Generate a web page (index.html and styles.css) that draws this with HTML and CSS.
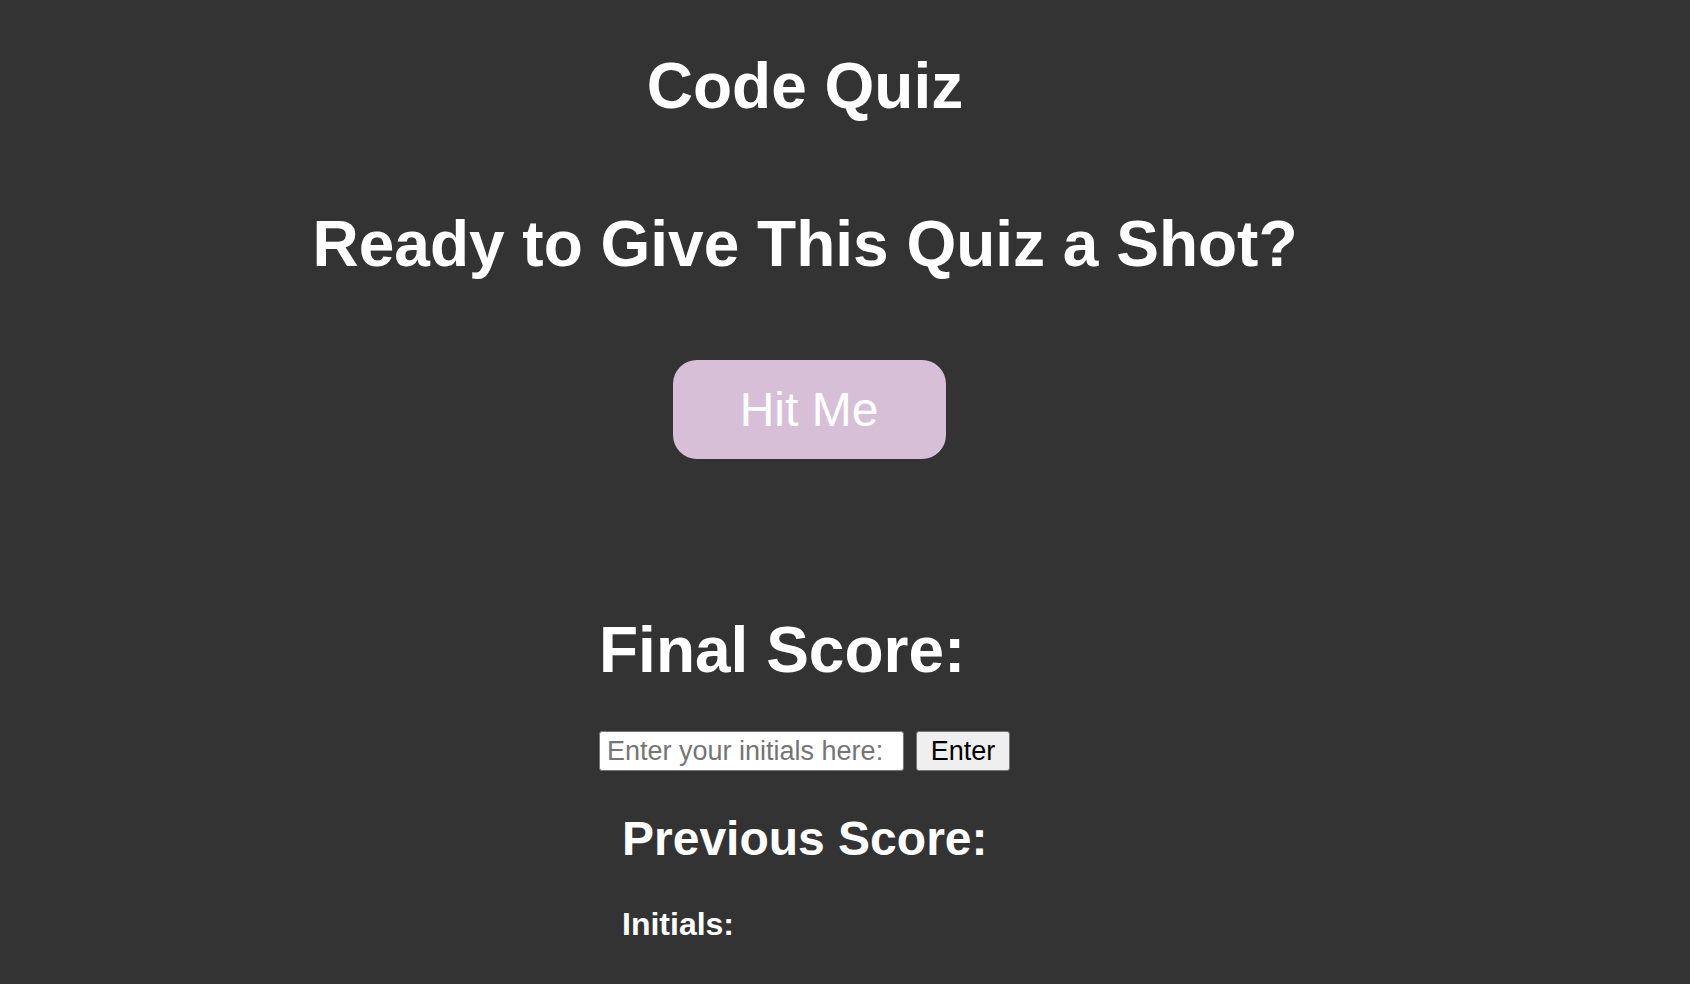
FILE: index.html
```html
<!DOCTYPE html>
<html lang="en">
<head>
<meta charset="utf-8">
<title>Code Quiz</title>
<link rel="stylesheet" href="styles.css">
</head>
<body>
<main class="page">
  <header class="title">Code Quiz</header>
  <section class="intro">
    <h2 class="prompt">Ready to Give This Quiz a Shot?</h2>
    <button class="start-btn" type="button">Hit Me</button>
  </section>
  <section class="score">
    <h2 class="final">Final Score:</h2>
    <form class="initials-form">
      <input class="initials-input" type="text" placeholder="Enter your initials here:">
      <button class="enter-btn" type="button">Enter</button>
    </form>
    <div class="previous">
      <h3 class="previous-title">Previous Score:</h3>
      <h4 class="initials-label">Initials:</h4>
    </div>
  </section>
</main>
</body>
</html>
```

FILE: styles.css
```css
html, body {
  margin: 0;
  padding: 0;
  background: #333333;
  color: #ffffff;
  font-family: "Liberation Sans", Arial, Helvetica, sans-serif;
}

.page {
  width: 1610px;
  padding-top: 49px;
  display: flex;
  flex-direction: column;
  align-items: center;
}

.title {
  font-size: 64px;
  font-weight: bold;
  line-height: 74px;
  margin: 0;
  text-align: center;
}

.intro {
  display: flex;
  flex-direction: column;
  align-items: center;
  margin-top: 84px;
}

.prompt {
  font-size: 64px;
  font-weight: bold;
  line-height: 74px;
  margin: 0;
  text-align: center;
}

.start-btn {
  margin-top: 79px;
  margin-left: 8px;
  width: 273px;
  height: 99px;
  border: none;
  border-radius: 24px;
  background: #d8bfd8;
  color: #ffffff;
  font-family: "Liberation Sans", Arial, Helvetica, sans-serif;
  font-size: 48px;
  padding: 0;
  cursor: pointer;
}

.score {
  width: 412px;
  margin-top: 154px;
  display: flex;
  flex-direction: column;
}

.final {
  font-size: 64px;
  font-weight: bold;
  line-height: 74px;
  margin: 0;
}

.initials-form {
  display: flex;
  gap: 12px;
  margin-top: 44px;
}

.initials-input {
  box-sizing: border-box;
  width: 305px;
  height: 40px;
  border: 1px solid #767676;
  border-radius: 3px;
  background: #ffffff;
  padding: 0 7px;
  font-family: "Liberation Sans", Arial, Helvetica, sans-serif;
  font-size: 27px;
  color: #000000;
}

.initials-input::placeholder {
  color: #757575;
}

.enter-btn {
  box-sizing: border-box;
  width: 94px;
  height: 40px;
  border: 1px solid #767676;
  border-radius: 3px;
  background: #efefef;
  color: #000000;
  padding: 0;
  font-family: "Liberation Sans", Arial, Helvetica, sans-serif;
  font-size: 27px;
}

.previous {
  padding-left: 23px;
  margin-top: 40px;
}

.previous-title {
  font-size: 48px;
  font-weight: bold;
  line-height: 55px;
  margin: 0;
}

.initials-label {
  font-size: 32px;
  font-weight: bold;
  line-height: 37px;
  margin: 40px 0 0;
}
```
